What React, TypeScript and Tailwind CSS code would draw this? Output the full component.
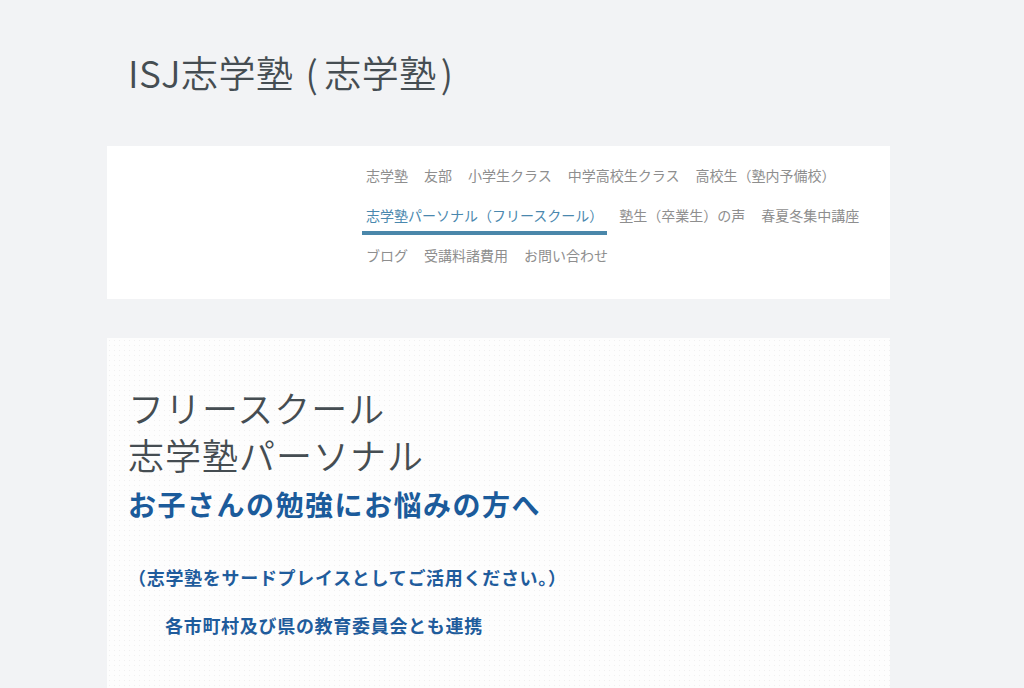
import React, { FC } from 'react';

const navRows: { label: string; active?: boolean }[][] = [
  [
    { label: '志学塾' },
    { label: '友部' },
    { label: '小学生クラス' },
    { label: '中学高校生クラス' },
    { label: '高校生（塾内予備校）' },
  ],
  [
    { label: '志学塾パーソナル（フリースクール）', active: true },
    { label: '塾生（卒業生）の声' },
    { label: '春夏冬集中講座' },
  ],
  [{ label: 'ブログ' }, { label: '受講料諸費用' }, { label: 'お問い合わせ' }],
];

const NavItem: FC<{ label: string; active?: boolean }> = ({ label, active }) => (
  <a
    href="#"
    className={`flex h-[40px] items-center px-[4px] text-[14px] leading-none border-b-4 ${
      active ? 'text-[#4a88ae] border-[#4a87aa]' : 'text-[#8e8e8e] border-transparent'
    }`}
  >
    <span className="pt-[4px]">{label}</span>
  </a>
);

const App: FC = () => {
  return (
    <div
      className="min-h-[688px] bg-[#f2f3f5] pb-10"
      style={{ fontFamily: '"Noto Sans CJK JP", "Noto Sans", sans-serif' }}
    >
      <header className="flex h-[146px] items-center pl-[128px]">
        <h1 className="text-[37px] font-[350] leading-none tracking-[0.5px] text-[#454d52] pb-[2px]">
          ISJ志学塾<span className="ml-[12px] mr-[6px]">(</span>志学塾<span className="ml-[4px]">)</span>
        </h1>
      </header>

      <nav className="ml-[107px] w-[783px] bg-white pl-[255px] pt-[9px] pb-[24px]">
        {navRows.map((row, i) => (
          <div key={i} className="flex gap-[8px]">
            {row.map((item) => (
              <NavItem key={item.label} label={item.label} active={item.active} />
            ))}
          </div>
        ))}
      </nav>

      <main className="ml-[107px] mt-[39px] w-[783px] bg-[#fdfdfd] bg-[radial-gradient(#f0f0f0_0.6px,transparent_0.8px)] bg-[length:5px_5px] px-[21px] pt-[46px] pb-[80px]">
        <h2 className="text-[36px] font-[350] leading-[47px] tracking-[1px] text-[#454d52]">
          フリースクール
          <br />
          志学塾パーソナル
        </h2>
        <p className="mt-[6px] text-[28px] font-bold leading-[40px] tracking-[1.5px] text-[#1b5b9b]">
          お子さんの勉強にお悩みの方へ
        </p>
        <p className="mt-[38px] text-[18px] font-bold leading-[30px] tracking-[0.7px] text-[#1f5c9c]">
          （志学塾をサードプレイスとしてご活用ください。）
        </p>
        <p className="mt-[18px] pl-[37px] text-[18px] font-bold leading-[30px] tracking-[0.7px] text-[#1f5c9c]">
          各市町村及び県の教育委員会とも連携
        </p>
      </main>
    </div>
  );
};

export default App;
